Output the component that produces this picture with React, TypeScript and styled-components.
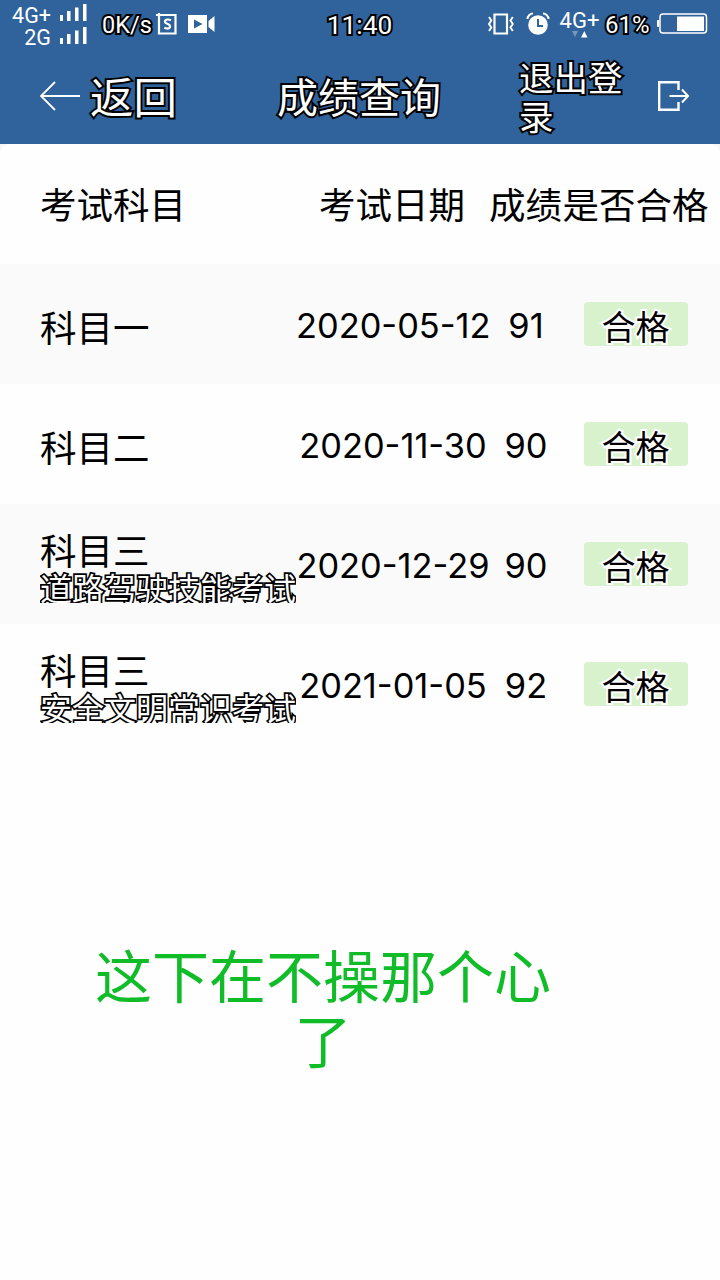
import React from "react";
import styled, { createGlobalStyle, css } from "styled-components";

const Global = createGlobalStyle`
  * { box-sizing: border-box; }
  html, body { margin: 0; background: #fefefe; }
  body { font-family: Inter, "Noto Sans CJK SC", sans-serif; color: #000; }
`;

const outlined = css`
  color: #fff;
  -webkit-text-stroke: 4px #000;
  paint-order: stroke fill;
  stroke-linejoin: round;
`;

const Page = styled.div`
  width: 720px;
  height: 1280px;
  overflow: hidden;
  background: #f6f6f6;
`;

const Panel = styled.main`
  height: 1136px;
  border-radius: 10px 10px 0 0;
  overflow: hidden;
  background: #fefefe;
`;

const Header = styled.header`
  height: 144px;
  background: #30639b;
  color: #fff;
`;

const StatusBar = styled.div`
  height: 48px;
  display: grid;
  grid-template-columns: 1fr auto 1fr;
  grid-template-rows: 48px;
  padding: 0 12px 0 11px;
  font-family: Roboto, sans-serif;
`;

const StatusSide = styled.div<{ $end?: boolean }>`
  display: flex;
  align-items: center;
  justify-content: ${(p) => (p.$end ? "flex-end" : "flex-start")};
  svg { display: block; flex: none; }
`;

const Carriers = styled.div`
  width: 76px;
  height: 48px;
  display: flex;
  flex-direction: column;
  padding-top: 4px;
`;

const Carrier = styled.div`
  flex: none;
  height: 22.5px;
  display: flex;
  justify-content: flex-end;
  align-items: center;
  gap: 8px;
  font-size: 21.5px;
  line-height: 23px;
  svg { margin-top: -4px; }
`;

const StatusText = styled.span<{ $size: number; $width?: number; $ml?: number }>`
  ${outlined}
  font-size: ${(p) => p.$size}px;
  line-height: 48px;
  width: ${(p) => (p.$width ? `${p.$width}px` : "auto")};
  margin-left: ${(p) => p.$ml ?? 0}px;
  padding-top: 1px;
  font-weight: 400;
  white-space: nowrap;
`;

const AlarmSlot = styled.div`
  margin-left: 12px;
`;

const Network = styled.div`
  width: 41px;
  margin-left: 9px;
  font-size: 22px;
  line-height: 22px;
  display: flex;
  flex-direction: column;
  align-items: center;
  padding-bottom: 1px;
  svg { margin-top: -1px; }
`;

const NavBar = styled.nav`
  height: 96px;
  display: grid;
  grid-template-columns: 238px 242px 138px 1fr;
  padding-left: 39px;
  align-items: center;
  svg { display: block; }
`;

const Back = styled.div`
  display: flex;
  align-items: center;
  gap: 10px;
`;

const NavText = styled.span<{ $size: number; $line: number }>`
  ${outlined}
  display: block;
  padding-top: 3px;
  font-size: ${(p) => p.$size}px;
  line-height: ${(p) => p.$line}px;
`;

const LogoutText = styled(NavText)`
  width: 108px;
  word-break: break-all;
`;

const Row = styled.div<{ $shaded?: boolean }>`
  height: 120px;
  display: grid;
  grid-template-columns: 256px 194px 72px 147px;
  padding-left: 40px;
  align-items: center;
  background: ${(p) => (p.$shaded ? "#fafafa" : "#fefefe")};
`;

const HeadRow = styled(Row)`
  grid-template-columns: 255px 194px 73px 147px;
  font-size: 36.5px;
  line-height: 54px;
  white-space: nowrap;
  padding-top: 4px;
`;

const Centered = styled.div`
  text-align: center;
`;

const Subject = styled.div`
  height: 80px;
  overflow: hidden;
  margin-top: -3px;
  font-size: 36.5px;
  white-space: nowrap;
`;

const SubjectSingle = styled.div`
  font-size: 36.5px;
  line-height: 54px;
  padding-top: 10px;
`;

const SubjectName = styled.div`
  line-height: 54px;
  padding-top: 2px;
`;

const SubjectDetail = styled.div`
  ${outlined}
  -webkit-text-stroke-width: 3.4px;
  font-size: 32px;
  line-height: 44px;
  margin-top: -11px;
`;

const Figure = styled.div`
  font-size: 34.4px;
  line-height: 44px;
  text-align: center;
  white-space: nowrap;
  padding-top: 4px;
`;

const Tag = styled.div`
  width: 104px;
  height: 44px;
  margin: 0 auto;
  border-radius: 4px;
  background: #d9f2ce;
  font-size: 34px;
  line-height: 51px;
  text-align: center;
  -webkit-text-stroke: 4px #fff;
  paint-order: stroke fill;
`;

const Note = styled.p`
  width: 456px;
  margin: 201px 0 0 95px;
  font-size: 57px;
  line-height: 65px;
  text-align: center;
  color: #10bd28;
  word-break: break-all;
`;

const SignalBars = () => (
  <svg width="28" height="18" viewBox="0 0 28 18" fill="#fff">
    <rect x="1" y="11" width="3" height="6" />
    <rect x="8" y="7" width="3.5" height="10" />
    <rect x="16" y="3.5" width="3.5" height="13.5" />
    <rect x="24" y="0" width="3.5" height="17" />
  </svg>
);

const SquareSIcon = () => (
  <svg width="22" height="24" viewBox="0 0 22 24" fill="none" stroke="#fff" strokeWidth="2.2">
    <path d="M0 3H19.500V21.500H3V1" />
    <path d="M15 8.300C11 6.500 8.500 8.200 9 10.200C9.700 12 14 11.600 14 14.400C14 16.800 11 17 8.300 15.800" />
  </svg>
);

const CameraIcon = () => (
  <svg width="27" height="18" viewBox="0 0 27 18">
    <path d="M0 0H19V18H0Z M20.500 6L26.500 1V17L20.500 12Z" fill="#fff" />
    <path d="M6 4.500L14.500 9L6 13.500Z" fill="#30639b" />
  </svg>
);

const VibrateIcon = () => (
  <svg width="26" height="22" viewBox="0 0 26 22" fill="none" stroke="#fff">
    <path d="M6.500 1.500H19V20.500H6.500Z" strokeWidth="2.200" />
    <path d="M1 4L3.300 7.500L1 11L3.300 14.500L1 18M24.800 4L22.500 7.500L24.800 11L22.500 14.500L24.800 18" strokeWidth="1.900" />
  </svg>
);

const AlarmIcon = () => (
  <svg width="24" height="24" viewBox="0 0 24 24" fill="none">
    <circle cx="12" cy="13" r="9.800" fill="#fff" />
    <path d="M1.500 7A5.500 5.500 0 0 1 7 1.600M22.500 7A5.500 5.500 0 0 0 17 1.600" stroke="#fff" strokeWidth="2" />
    <path d="M12 7V14H17" stroke="#30639b" strokeWidth="2" />
  </svg>
);

const DataArrows = () => (
  <svg width="16" height="7" viewBox="0 0 16 7">
    <path d="M0 0H6L3 6Z" fill="#7299c2" />
    <path d="M9 6.500H15.500L12.300 0Z" fill="#fff" />
  </svg>
);

const BatteryIcon = () => (
  <svg width="52" height="22" viewBox="0 0 52 22">
    <rect x="4" y="1" width="46.500" height="19" rx="3" fill="none" stroke="#fff" strokeWidth="1.500" />
    <rect x="21" y="3.500" width="27" height="14.500" fill="#fff" />
    <path d="M3 7H2Q1 7 1 8V13Q1 14 2 14H3Z" fill="#fff" />
  </svg>
);

const BackArrow = () => (
  <svg width="41" height="30" viewBox="0 0 41 30" fill="none" stroke="#fff" strokeWidth="1.800">
    <path d="M41 15H2M16 1L2 15L16 29" />
  </svg>
);

const LogoutIcon = () => (
  <svg width="33" height="32" viewBox="0 0 33 32" fill="none" stroke="#fff" strokeWidth="2.400">
    <path d="M21.500 10V2.200H2.200V29.800H21.500V22" />
    <path d="M12.500 16H31M25 9.500L31 16L25 22.500" strokeWidth="2" />
  </svg>
);

const LeftIcons = styled.div`
  display: flex;
  align-items: center;
  gap: 10px;
`;

const results = [
  { name: "科目一", date: "2020-05-12", score: "91" },
  { name: "科目二", date: "2020-11-30", score: "90" },
  { name: "科目三", detail: "道路驾驶技能考试", date: "2020-12-29", score: "90" },
  { name: "科目三", detail: "安全文明常识考试", date: "2021-01-05", score: "92" },
];

export default function App() {
  return (
    <Page>
      <Global />
      <Header>
        <StatusBar>
          <StatusSide>
            <Carriers>
              <Carrier>4G+<SignalBars /></Carrier>
              <Carrier>2G<SignalBars /></Carrier>
            </Carriers>
            <StatusText $size={23.5} $width={54} $ml={15}>0K/s</StatusText>
            <LeftIcons>
              <SquareSIcon />
              <CameraIcon />
            </LeftIcons>
          </StatusSide>
          <StatusText $size={26.3}>11:40</StatusText>
          <StatusSide $end>
            <VibrateIcon />
            <AlarmSlot><AlarmIcon /></AlarmSlot>
            <Network>4G+<DataArrows /></Network>
            <StatusText $size={24} $width={51} $ml={5}>61%</StatusText>
            <BatteryIcon />
          </StatusSide>
        </StatusBar>
        <NavBar>
          <Back>
            <BackArrow />
            <NavText $size={43.5} $line={60}>返回</NavText>
          </Back>
          <NavText $size={41} $line={60}>成绩查询</NavText>
          <LogoutText $size={34.5} $line={39}>退出登录</LogoutText>
          <LogoutIcon />
        </NavBar>
      </Header>
      <Panel>
        <HeadRow>
          <div>考试科目</div>
          <Centered>考试日期</Centered>
          <Centered>成绩</Centered>
          <Centered>是否合格</Centered>
        </HeadRow>
        {results.map((r, i) => (
          <Row key={i} $shaded={i % 2 === 0}>
            {r.detail ? (
              <Subject>
                <SubjectName>{r.name}</SubjectName>
                <SubjectDetail>{r.detail}</SubjectDetail>
              </Subject>
            ) : (
              <SubjectSingle>{r.name}</SubjectSingle>
            )}
            <Figure>{r.date}</Figure>
            <Figure>{r.score}</Figure>
            <Tag>合格</Tag>
          </Row>
        ))}
        <Note>这下在不操那个心了</Note>
      </Panel>
    </Page>
  );
}
